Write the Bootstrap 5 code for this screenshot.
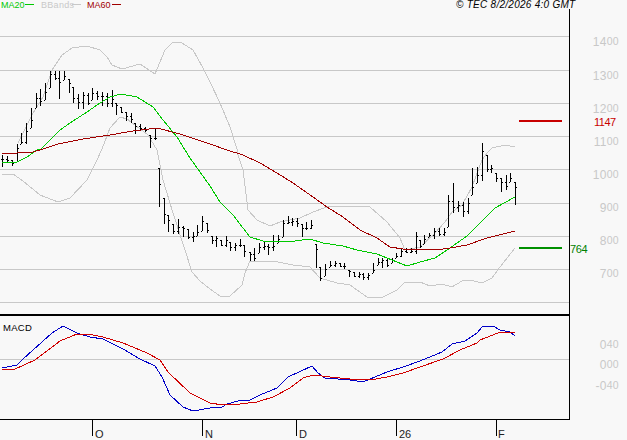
<!DOCTYPE html>
<html lang="en">
<head>
<meta charset="utf-8">
<title>Chart</title>
<link rel="stylesheet" href="https://cdn.jsdelivr.net/npm/bootstrap@5.3.0/dist/css/bootstrap.min.css">
<style>
html,body{background:#f8f8f8;margin:0;overflow:hidden}
.chart-svg{display:block;width:627px;height:440px}
.chart-svg text{font-family:"Liberation Sans",Arial,sans-serif;font-size:9px}
.chart-svg polyline,.chart-svg path,.chart-svg line{fill:none;shape-rendering:crispEdges}
.gl{stroke:#c8c8c8;stroke-width:1}
.ax{stroke:#000;stroke-width:1}
.axl text,.axl{fill:#c8c8c8}
.chart-svg .axl text{font-size:12px;letter-spacing:.3px}
.axl tspan{font-size:10.5px}
.c-g{stroke:#00c800}.c-r{stroke:#a00000}.c-b{stroke:#c8c8c8}
.c-mb{stroke:#0000c8}.c-mr{stroke:#d00000}
.chart-svg .hdr{font-style:italic;font-size:10px;fill:#000;letter-spacing:.27px}
.chart-svg .xl{font-size:11px;fill:#222}
.chart-svg .lab{font-size:9.5px;letter-spacing:.3px}
.chart-svg .pr{font-size:11px}
.chart-svg .pr-r{letter-spacing:-.5px}
.chart-svg .pr-g{letter-spacing:-.4px}
</style>
</head>
<body>
<main class="d-block">
<svg class="chart-svg" viewBox="0 0 627 440" xmlns="http://www.w3.org/2000/svg">
<path class="gl" d="M0 36.5H569M0 70.5H569M0 103.5H569M0 136.5H569M0 169.5H569M0 203.5H569M0 236.5H569M0 269.5H569M0 302.5H569M0 359.5H569"/>
<path class="ax" d="M569.5 9V419.5M0 419.5H569.5M92.5 419V436M202.5 419V436M296.5 419V436M396.5 419V436M496.5 419V436"/>
<path stroke="#000" stroke-width="2" d="M0 315H570"/>

<polyline class="c-b" points="18,143 33,113 43,97 52,70 62,55 72,48 87,46 100,50 107,57 112,65 122,69 140,64 155,74 165,50 173,42 182,43 193,50 203,68 210,82 220,103 230,127 237,149 238,155 243,170 248,210 257,220 270,226 280,222 300,218 313,212 327,207 350,206 370,207 387,222 400,238 405,250 420,247 435,233 445,222 452,212 462,205 472,187 482,160 488,152 492,148 505,145 515,147"/>
<polyline class="c-b" points="2,175 13,174 23,181 40,195 58,202 70,198 87,180 97,160 102,149 110,128 120,117 127,119 135,125 148,135 157,150 163,180 173,213 185,250 192,272 200,281 210,289 220,296 230,296 242,285 245,273 250,261 273,261 293,265 310,267 320,278 337,283 350,285 367,297 383,297 397,290 405,282 420,282 430,286 442,284 452,287 462,281 470,280 482,283 492,278 500,267 515,248"/>
<path id="bars" stroke="#000" stroke-width="1"/>
<polyline class="c-g" points="2,162 15,163 27,157 37,150 41,149 60,130 70,123 87,112 100,103 110,97 121,94 137,97 153,107 163,120 177,137 185,150 190,158 200,172 210,186 220,202 233,215 243,228 250,237 263,241 287,242 310,239 323,243 343,246 357,250 377,254 397,262 407,266 420,262 435,258 450,248 467,236 478,225 495,208 515,197"/>
<polyline class="c-r" points="2,153 17,153 33,152 43,149 58,144 83,139 110,135 133,131 157,128 180,134 210,144 227,150 243,155 260,163 277,173 293,183 313,197 327,207 343,217 360,230 377,238 390,247 403,249 420,249 437,250 450,248 467,245 487,238 515,231"/>

<polyline class="c-mb" points="2,368 17,365 23,359 52,333 63,326 77,333 90,337 103,339 123,349 140,359 155,366 162,377 170,395 183,407 193,411 210,408 222,407 227,404 238,401 250,400 260,395 277,388 288,377 312,366 318,373 325,378 350,380 363,382 387,372 403,367 420,361 442,352 452,344 465,341 477,333 482,327 493,326 500,330 510,332 515,336"/>
<polyline class="c-mr" points="2,370 15,369 35,360 60,341 77,334 88,334 103,337 123,343 147,353 160,360 168,372 190,393 210,403 223,405 240,404 257,402 273,397 290,388 303,378 313,375 330,377 350,379 370,380 387,377 403,373 420,367 443,359 460,350 477,343 480,340 498,333 515,332"/>

<path stroke="#c80000" stroke-width="2" d="M519 120.5H562"/>
<path stroke="#009000" stroke-width="2" d="M519 248H562"/>
<path class="c-g" d="M25 4.5H34"/><path class="c-b" d="M72 4.5H81"/><path class="c-r" d="M112 4.5H121"/>

<text x="1" y="8" fill="#00c800">MA20</text>
<text x="41" y="8" fill="#c8c8c8" letter-spacing=".3">BBands</text>
<text x="87" y="8" fill="#a00000">MA60</text>
<text class="hdr" x="456" y="8">© TEC 8/2/2026 4:0 GMT</text>

<g class="axl" text-anchor="end">
<text x="619" y="46">14<tspan dy="-1.5">00</tspan></text>
<text x="619" y="80">13<tspan dy="-1.5">00</tspan></text>
<text x="619" y="113">12<tspan dy="-1.5">00</tspan></text>
<text x="619" y="146">11<tspan dy="-1.5">00</tspan></text>
<text x="619" y="179">10<tspan dy="-1.5">00</tspan></text>
<text x="619" y="212">9<tspan dy="-1.5">00</tspan></text>
<text x="619" y="245">8<tspan dy="-1.5">00</tspan></text>
<text x="619" y="278">7<tspan dy="-1.5">00</tspan></text>
<text x="619" y="349">0<tspan dy="-1.5">40</tspan></text>
<text x="619" y="369">0<tspan dy="-1.5">00</tspan></text>
<text x="619" y="390">-0<tspan dy="-1.5">40</tspan></text>
</g>
<text class="pr pr-r" x="594" y="126" fill="#c80000">1147</text>
<text class="pr pr-g" x="570" y="253" fill="#008000">764</text>

<text class="lab" x="3" y="331" fill="#000">MACD</text>
<text class="xl" x="95" y="438">O</text>
<text class="xl" x="205" y="438">N</text>
<text class="xl" x="299" y="438">D</text>
<text class="xl" x="399" y="438">26</text>
<text class="xl" x="498" y="438">F</text>
</svg>
</main>
<script src="https://cdn.jsdelivr.net/npm/bootstrap@5.3.0/dist/js/bootstrap.bundle.min.js"></script>
<script>
var b=[[2,155,167],[7,156,162],[12,160,166],[17,144,162],[21,133,144],[26,123,144],[31,108,128],[36,93,108],[40,89,106],[45,83,100],[50,71,88],[55,71,80],[59,71,99],[64,71,80],[69,79,93],[73,87,103],[78,94,109],[83,92,109],[88,93,105],[92,88,100],[97,91,100],[102,92,106],[107,93,107],[112,90,107],[116,103,115],[121,107,113],[126,112,121],[131,113,123],[135,123,134],[140,124,130],[145,127,132],[150,135,148],[155,128,140],[159,168,207],[164,198,224],[168,215,232],[173,224,234],[178,219,234],[183,226,237],[188,229,239],[193,232,242],[197,225,236],[202,216,231],[207,223,233],[212,236,244],[216,236,247],[221,240,246],[226,236,247],[230,242,251],[235,243,251],[240,239,247],[244,245,257],[250,252,261],[254,248,261],[259,243,253],[264,241,250],[268,244,255],[273,235,251],[278,235,243],[283,220,237],[288,216,224],[292,218,226],[297,218,227],[302,224,237],[306,222,230],[311,220,229],[316,244,268],[320,267,281],[325,264,276],[330,261,267],[335,261,267],[340,263,267],[344,263,269],[349,270,277],[354,272,277],[359,272,278],[363,273,280],[368,273,280],[373,263,273],[378,258,265],[382,258,268],[387,259,267],[392,258,263],[396,253,258],[401,248,257],[406,248,253],[411,248,253],[416,232,254],[420,240,248],[424,235,244],[429,233,237],[434,228,239],[439,228,236],[444,228,236],[448,195,227],[453,183,213],[458,201,212],[463,202,217],[468,198,214],[472,168,195],[477,167,183],[482,143,181],[487,155,172],[491,165,173],[496,173,182],[501,178,192],[506,175,190],[510,173,182],[515,182,205]];
var f=[.3,.7,.5,.2,.8,.4,.6],d="",p=null;
b.forEach(function(r,i){
  var x=r[0],h=r[1],l=r[2],cl=Math.round(h+(l-h)*f[i%7])+.5,op=p===null?cl:Math.floor(Math.min(l,Math.max(h,p)))+.5;
  d+="M"+(x+.5)+" "+h+"V"+l+"M"+(x-1)+" "+op+"H"+x+"M"+(x+1)+" "+cl+"H"+(x+2);
  p=cl;
});
document.getElementById("bars").setAttribute("d",d);
</script>
</body>
</html>
